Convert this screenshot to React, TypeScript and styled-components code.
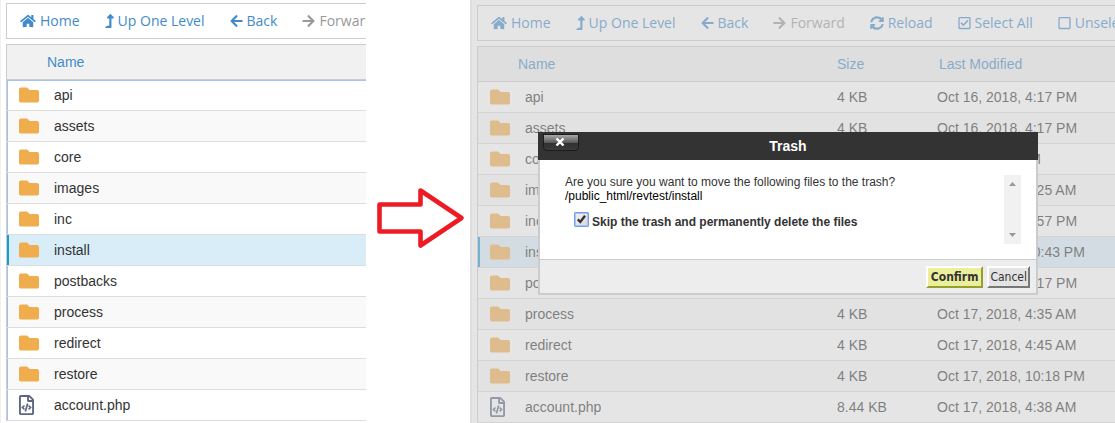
import React from "react";
import styled, { createGlobalStyle } from "styled-components";
import {
  FaHome,
  FaLevelUpAlt,
  FaArrowLeft,
  FaArrowRight,
  FaSyncAlt,
  FaRegCheckSquare,
  FaRegSquare,
  FaFolder,
  FaRegFileCode,
} from "react-icons/fa";

const GlobalStyle = createGlobalStyle`
  *, *::before, *::after { box-sizing: border-box; }
  html, body, #root { height: 100%; }
  body {
    margin: 0;
    overflow: hidden;
    background: #fff;
    color: #333;
    font: 14px/20px "Liberation Sans", Arial, sans-serif;
  }
`;

const Page = styled.main`
  display: grid;
  grid-template-columns: minmax(0, 366fr) minmax(0, 104fr) minmax(0, 645fr);
  height: 100%;
  overflow: hidden;
`;

const Panel = styled.section<{ $edge: number; $top: number; $edgeColor: string }>`
  position: relative;
  overflow: hidden;
  border-left: ${(p) => p.$edge}px solid ${(p) => p.$edgeColor};
  padding: ${(p) => p.$top}px 0 0 5px;
`;

const Toolbar = styled.nav`
  display: flex;
  height: 36px;
  margin-bottom: 5px;
  border: 1px solid #ccc;
  border-right: 0;
  overflow: hidden;
`;

const ToolButton = styled.button`
  display: flex;
  flex: none;
  align-items: center;
  gap: 4px;
  padding: 0 12px 0 13px;
  border: 0;
  background: none;
  color: #428bca;
  font: 14px/20px "Open Sans", sans-serif;
  white-space: nowrap;

  &:disabled { color: #999; }
`;

const Glyph = styled.span<{ $width: number; $height: number }>`
  display: block;
  width: ${(p) => p.$width}px;
  height: ${(p) => p.$height}px;

  svg {
    display: block;
    width: 100%;
    height: 100%;
  }
`;

const FileTable = styled.table<{ $focused: boolean }>`
  width: 100%;
  table-layout: fixed;
  border-collapse: separate;
  border-spacing: 0;
  border-top: 1px solid #ccc;
  border-left: 1px solid #ccc;

  tbody {
    box-shadow: ${(p) => (p.$focused ? "inset 1px 1px 0 #a5c3f5" : "none")};
  }
`;

const HeadCell = styled.th<{ $inset: number }>`
  height: 35px;
  padding: 0 0 0 ${(p) => p.$inset}px;
  border-bottom: 1px solid #ccc;
  background: #f1f1f1;
  color: #428bca;
  font-weight: 400;
  text-align: left;
`;

const Row = styled.tr<{ $selected?: boolean }>`
  background: ${(p) => (p.$selected ? "#d9edf8" : "transparent")};

  &:nth-child(even) {
    background: ${(p) => (p.$selected ? "#d9edf8" : "rgba(0, 0, 0, 0.024)")};
  }

  td:first-child {
    box-shadow: ${(p) => (p.$selected ? "inset 2px 0 0 #179bd7" : "none")};
  }
`;

const Cell = styled.td`
  height: 31px;
  padding: 0 0 0 8px;
  border-bottom: 1px solid #ddd;
  white-space: nowrap;
`;

const IconCell = styled(Cell)<{ $file: boolean }>`
  padding: 0 0 0 12px;
  color: ${(p) => (p.$file ? "#5b6683" : "#f0ad4e")};
`;

const ArrowColumn = styled.div`
  padding: 187px 0 0 11px;

  svg { display: block; }
`;

const Overlay = styled.div`
  position: absolute;
  inset: 0;
  background: rgba(204, 204, 204, 0.5);
`;

const Dialog = styled.div`
  position: absolute;
  top: 132px;
  left: 66px;
  width: 500px;
  border: 2px solid #ccc;
  border-top: 0;
  background: #fff;
  font-size: 12px;
  line-height: 14px;
`;

const DialogHead = styled.header`
  display: grid;
  grid-template-columns: 1fr auto 1fr;
  align-items: start;
  height: 28px;
  margin: 0 -2px;
  padding: 0 5px;
  background: #333;
  color: #fff;
`;

const DialogTitle = styled.h2`
  margin: 0;
  font-size: 14px;
  line-height: 28px;
`;

const CloseButton = styled.button`
  display: flex;
  align-items: center;
  justify-content: center;
  width: 36px;
  height: 17px;
  margin-top: 2px;
  padding: 0 2px 2px 0;
  border: 1px solid #1b1c1e;
  border-radius: 0 0 4px 4px;
  background: linear-gradient(#a9a9a9, #5a5a5a 50%, #303030 51%, #3c3a38);
  color: #fff;
`;

const DialogBody = styled.div`
  display: flex;
  justify-content: space-between;
  padding: 15px 15px 15px 25px;
`;

const Message = styled.div`
  p { margin: 0; }
`;

const FilePath = styled.p`
  color: #000;
`;

const Option = styled.label`
  display: flex;
  align-items: flex-start;
  gap: 3px;
  padding: 9px 0 0 9px;
  font-weight: 700;
  line-height: 20px;
`;

const CheckWrap = styled.span`
  display: grid;
  width: 15px;
  height: 15px;

  > * { grid-area: 1 / 1; }
`;

const Checkbox = styled.input`
  appearance: none;
  width: 15px;
  height: 15px;
  margin: 0;
  border: 1px solid #7a9fe0;
  border-radius: 1px;
  background: linear-gradient(135deg, #f3f3f3, #d8d8d8);
  box-shadow: inset 0 0 0 1px #a5c3f8;

  & + svg { visibility: hidden; pointer-events: none; }
  &:checked + svg { visibility: visible; }
`;

const ScrollTrack = styled.div`
  display: flex;
  flex-direction: column;
  justify-content: space-between;
  align-items: center;
  width: 17px;
  height: 69px;
  padding: 7px 0;
  background: #f1f1f1;
`;

const DialogFoot = styled.footer`
  display: flex;
  justify-content: flex-end;
  gap: 4px;
  padding: 6px 6px 5px;
  border-top: 1px solid #ccc;
  background: #ededed;
`;

const DialogButton = styled.button<{ $primary?: boolean }>`
  height: 22px;
  padding: 0 ${(p) => (p.$primary ? 3 : 1)}px;
  border: 2px solid;
  border-color: ${(p) =>
    p.$primary ? "#fff #94a02e #94a02e #fff" : "#fff #777 #777 #fff"};
  background: ${(p) => (p.$primary ? "#ebef9b" : "#e3e3e3")};
  color: #333;
  font: ${(p) => (p.$primary ? 700 : 400)} 12px/16px "DejaVu Sans Condensed", "DejaVu Sans", sans-serif;
`;

type Tool = { label: string; icon: React.ReactNode; width: number; disabled?: boolean };

const tools: Tool[] = [
  { label: "Home", icon: <FaHome />, width: 16 },
  { label: "Up One Level", icon: <FaLevelUpAlt />, width: 9 },
  { label: "Back", icon: <FaArrowLeft />, width: 13 },
  { label: "Forward", icon: <FaArrowRight />, width: 13, disabled: true },
  { label: "Reload", icon: <FaSyncAlt />, width: 14 },
  { label: "Select All", icon: <FaRegCheckSquare />, width: 13 },
  { label: "Unselect All", icon: <FaRegSquare />, width: 13 },
];

const files = [
  { name: "api", size: "4 KB", modified: "Oct 16, 2018, 4:17 PM" },
  { name: "assets", size: "4 KB", modified: "Oct 16, 2018, 4:17 PM" },
  { name: "core", size: "4 KB", modified: "Today, 10:17 PM" },
  { name: "images", size: "4 KB", modified: "Oct 17, 2018, 4:25 AM" },
  { name: "inc", size: "4 KB", modified: "Oct 16, 2018, 4:57 PM" },
  { name: "install", size: "4 KB", modified: "Oct 17, 2018, 10:43 PM" },
  { name: "postbacks", size: "4 KB", modified: "Oct 16, 2018, 4:17 PM" },
  { name: "process", size: "4 KB", modified: "Oct 17, 2018, 4:35 AM" },
  { name: "redirect", size: "4 KB", modified: "Oct 17, 2018, 4:45 AM" },
  { name: "restore", size: "4 KB", modified: "Oct 17, 2018, 10:18 PM" },
  { name: "account.php", size: "8.44 KB", modified: "Oct 17, 2018, 4:38 AM" },
];

function FileBrowser({ toolCount, detailed }: { toolCount: number; detailed: boolean }) {
  return (
    <>
      <Toolbar>
        {tools.slice(0, toolCount).map((t) => (
          <ToolButton key={t.label} type="button" disabled={t.disabled}>
            <Glyph $width={t.width} $height={14}>
              {t.icon}
            </Glyph>
            {t.label}
          </ToolButton>
        ))}
      </Toolbar>
      <FileTable $focused={!detailed}>
        <colgroup>
          <col style={{ width: 39 }} />
          <col style={{ width: detailed ? 312 : "auto" }} />
          {detailed && <col style={{ width: 100 }} />}
          {detailed && <col />}
        </colgroup>
        <thead>
          <tr>
            <HeadCell $inset={0} aria-label="Type" />
            <HeadCell $inset={1}>Name</HeadCell>
            {detailed && <HeadCell $inset={8}>Size</HeadCell>}
            {detailed && <HeadCell $inset={10}>Last Modified</HeadCell>}
          </tr>
        </thead>
        <tbody>
          {files.map((f) => {
            const isFile = f.name.includes(".");
            return (
              <Row key={f.name} $selected={f.name === "install"}>
                <IconCell $file={isFile}>
                  <Glyph $width={isFile ? 15 : 20} $height={20}>
                    {isFile ? <FaRegFileCode /> : <FaFolder />}
                  </Glyph>
                </IconCell>
                <Cell>{f.name}</Cell>
                {detailed && <Cell>{f.size}</Cell>}
                {detailed && <Cell>{f.modified}</Cell>}
              </Row>
            );
          })}
        </tbody>
      </FileTable>
    </>
  );
}

function TrashDialog() {
  return (
    <Dialog role="dialog" aria-labelledby="trash-title">
      <DialogHead>
        <CloseButton type="button" aria-label="Close">
          <svg width="10" height="8" viewBox="0 0 10 8">
            <path d="M1.5 0.5 8.5 7.5M8.5 0.5 1.5 7.5" stroke="#fff" strokeWidth="2.4" />
          </svg>
        </CloseButton>
        <DialogTitle id="trash-title">Trash</DialogTitle>
      </DialogHead>
      <DialogBody>
        <Message>
          <p>Are you sure you want to move the following files to the trash?</p>
          <FilePath>/public_html/revtest/install</FilePath>
          <Option>
            <CheckWrap>
              <Checkbox type="checkbox" defaultChecked />
              <svg width="15" height="15" viewBox="0 0 15 15">
                <path d="M3.8 7.4 6.3 10 11 3.8" fill="none" stroke="#333" strokeWidth="2.4" />
              </svg>
            </CheckWrap>
            Skip the trash and permanently delete the files
          </Option>
        </Message>
        <ScrollTrack>
          <svg width="7" height="4" viewBox="0 0 7 4">
            <path d="M0 4 3.5 0 7 4z" fill="#999" />
          </svg>
          <svg width="7" height="4" viewBox="0 0 7 4">
            <path d="M0 0 3.5 4 7 0z" fill="#999" />
          </svg>
        </ScrollTrack>
      </DialogBody>
      <DialogFoot>
        <DialogButton type="button" $primary>
          Confirm
        </DialogButton>
        <DialogButton type="button">Cancel</DialogButton>
      </DialogFoot>
    </Dialog>
  );
}

export default function App() {
  return (
    <>
      <GlobalStyle />
      <Page>
        <Panel $edge={1} $top={3} $edgeColor="#f1f1f1">
          <FileBrowser toolCount={4} detailed={false} />
        </Panel>
        <ArrowColumn>
          <svg width="88" height="62" viewBox="0 0 88 62" aria-hidden="true">
            <path
              d="M2.5 17.5H43.5V3.5L84.5 31 43.5 58.5V44.5H2.5z"
              fill="#fff"
              stroke="#ed1c24"
              strokeWidth="4.6"
              strokeLinejoin="round"
            />
          </svg>
        </ArrowColumn>
        <Panel $edge={2} $top={5} $edgeColor="#dedede">
          <FileBrowser toolCount={7} detailed />
          <Overlay />
          <TrashDialog />
        </Panel>
      </Page>
    </>
  );
}
